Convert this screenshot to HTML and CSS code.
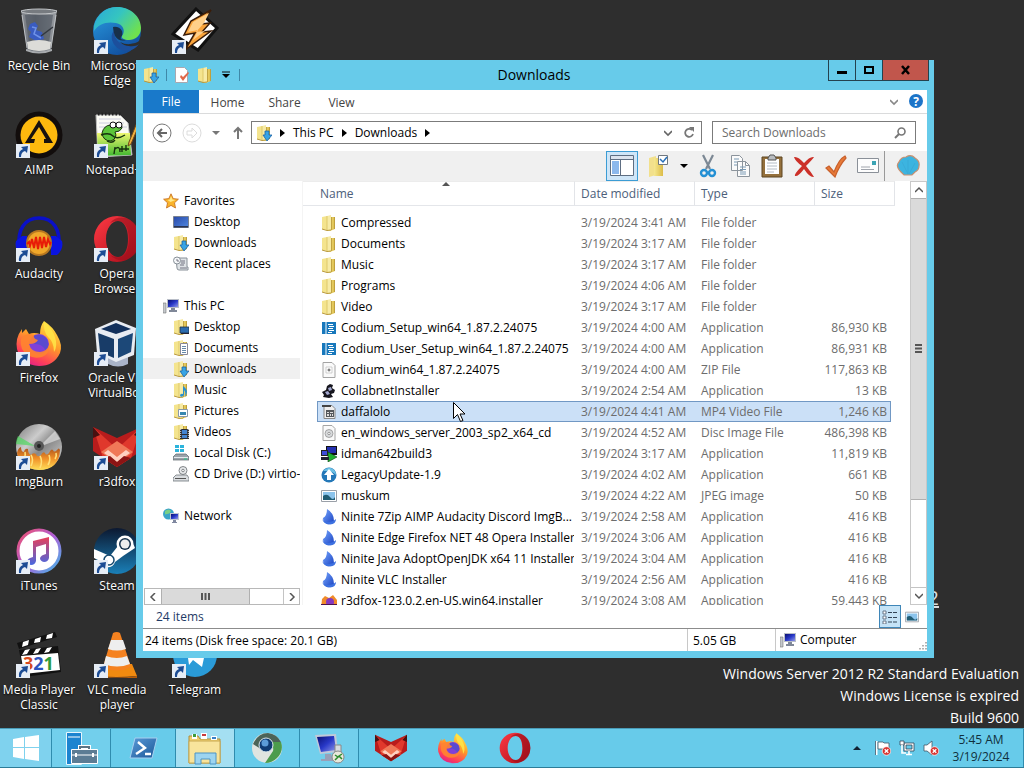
FILE: index.html
```html
<!DOCTYPE html>
<html lang="en">
<head>
  <meta charset="UTF-8">
  <meta name="viewport" content="width=device-width, initial-scale=1.0">
  <title>Downloads</title>
  <link rel="stylesheet" href="styles.css">
</head>
<body>
  <svg class="sprite" aria-hidden="true">
    <defs>
      <linearGradient id="g-folder" x1="0" x2="1"><stop offset="0" stop-color="#f6e890"/><stop offset="1" stop-color="#dcbc48"/></linearGradient>
      <linearGradient id="g-edge" x1="0" x2="1" y1="0" y2=".6"><stop offset="0" stop-color="#2aa8d8"/><stop offset=".5" stop-color="#35c5c0"/><stop offset="1" stop-color="#6fe04f"/></linearGradient>
      <linearGradient id="g-edge2" x1="0" x2=".6" y1="0" y2="1"><stop offset="0" stop-color="#2ba0e4"/><stop offset="1" stop-color="#1150a0"/></linearGradient>
      <linearGradient id="g-opera" x1="0" x2="1" y1="0" y2="1"><stop offset="0" stop-color="#ff3a44"/><stop offset="1" stop-color="#a80b18"/></linearGradient>
      <linearGradient id="g-fox" x1=".8" x2=".3" y1="0" y2="1"><stop offset="0" stop-color="#fff14a"/><stop offset=".45" stop-color="#ff9a2a"/><stop offset=".8" stop-color="#ff4058"/><stop offset="1" stop-color="#e0208a"/></linearGradient>
      <linearGradient id="g-disc" x1="0" x2="1" y1="0" y2="1"><stop offset="0" stop-color="#777"/><stop offset=".35" stop-color="#ccc"/><stop offset=".55" stop-color="#888"/><stop offset="1" stop-color="#ddd"/></linearGradient>
      <linearGradient id="g-flame" x1="0" x2="0" y1="0" y2="1"><stop offset="0" stop-color="#a8501a"/><stop offset=".5" stop-color="#f09028"/><stop offset="1" stop-color="#ffe05a"/></linearGradient>
      <linearGradient id="g-bin" x1="0" x2="1"><stop offset="0" stop-color="#8c9096"/><stop offset=".4" stop-color="#5c6169"/><stop offset="1" stop-color="#9da1a6"/></linearGradient>
      <linearGradient id="g-itunes" x1="0" x2="1" y1="0" y2="1"><stop offset="0" stop-color="#f0506a"/><stop offset=".5" stop-color="#b060d8"/><stop offset="1" stop-color="#40b8e8"/></linearGradient>
      <linearGradient id="g-note" x1="0" x2="0" y1="0" y2="1"><stop offset="0" stop-color="#e8405a"/><stop offset="1" stop-color="#4868e0"/></linearGradient>
      <linearGradient id="g-steam" x1="0" x2="0" y1="0" y2="1"><stop offset="0" stop-color="#0c1830"/><stop offset="1" stop-color="#1a80b8"/></linearGradient>
      <linearGradient id="g-screen" x1="0" x2="1" y1="0" y2="1"><stop offset="0" stop-color="#0a1070"/><stop offset=".5" stop-color="#2838c8"/><stop offset="1" stop-color="#9098e8"/></linearGradient>
      <linearGradient id="g-desk" x1="0" x2="1" y1="0" y2="1"><stop offset="0" stop-color="#2848a8"/><stop offset="1" stop-color="#5088e0"/></linearGradient>
      <linearGradient id="g-ninite" x1="0" x2="1" y1="0" y2="1"><stop offset="0" stop-color="#78a8ff"/><stop offset="1" stop-color="#1840c0"/></linearGradient>
      <linearGradient id="g-ps" x1="0" x2="1" y1="0" y2="1"><stop offset="0" stop-color="#5a9ad8"/><stop offset="1" stop-color="#1c5898"/></linearGradient>
      <linearGradient id="g-grass" x1="0" x2="0" y1="0" y2="1"><stop offset="0" stop-color="#f0f870"/><stop offset="1" stop-color="#40b830"/></linearGradient>
    </defs>

    <!-- desktop icons -->
    <symbol id="recycle" viewBox="0 0 48 48">
      <path d="M6 3h36l-6 40q-12 5-24 0z" fill="url(#g-bin)"/>
      <path d="M10 8h28l-4 28H14z" fill="#555c66" opacity=".7"/>
      <path d="M15 17l5-2 3 4-2 4 6 2 2 7-8 2-7-4 2-5-3-3z" fill="#3a5cc0"/>
      <path d="M17 20l4 1-2 6 7 4" stroke="#6f92e8" stroke-width="1.5" fill="none"/>
      <path d="M26 29l12-9" stroke="#33383f" stroke-width="1.5"/>
      <path d="M12 35q12-4 24 0l-1 7q-11 4-22 0z" fill="#dcdcd8"/>
      <path d="M11 42q13 5 26 0v2q-13 5-26 0z" fill="#a8abae"/>
      <ellipse cx="24" cy="4.500" rx="18" ry="2.500" fill="#777b80" stroke="#c3c6c9"/>
      <path d="M7 8l5 33M41 8l-5 33" stroke="#cfd2d5" stroke-width="1" opacity=".8"/>
    </symbol>
    <symbol id="edge" viewBox="0 0 48 48">
      <circle cx="24" cy="24" r="24" fill="url(#g-edge2)"/>
      <path d="M1 19C4 7 13 0 24 0c14 0 24 10 24 21 0 8-6 12-12 12-5 0-8-2-7-4 4-5 1-12-6-13C14 14 5 17 1 24z" fill="url(#g-edge)"/>
      <path d="M24 22q-7 3-5 11 3 10 14 11 8 0 13-7-4 3-10 2-10-1-14-9-1-5 2-8z" fill="#1c4f9c"/>
      <path d="M20 20q6-1 9 4 1 4-1 6-2 3 5 3-7 2-11-4-2-5-2-9z" fill="#18304a"/>
      <path d="M46 37q-4 3-10 2-5 0-9-4 9 5 20-1z" fill="#2e2e2e"/>
    </symbol>
    <symbol id="winamp" viewBox="0 0 48 48">
      <path d="M25 2l21 19-19 22L2 27z" fill="#fff" stroke="#111" stroke-width="3"/>
      <path d="M40 3L20 14l-7 14 11-2-10 17 26-19-9 1 8-9-9 1z" fill="#f9a33a" stroke="#3a1c08" stroke-width="1.500"/>
      <path d="M38 6L22 15l-5 10 10-2-5 10 12-9-9 1 8-9z" fill="#ffd08a"/>
    </symbol>
    <symbol id="aimp" viewBox="0 0 48 48">
      <circle cx="24" cy="24" r="23.500" fill="#120d0c"/>
      <circle cx="24" cy="24" r="18.500" fill="#fdb90e"/>
      <path d="M24 9l14 23h-9v-4h2l-7-12-8 12h4l-1 4H10z" fill="#17110f"/>
    </symbol>
    <symbol id="npp" viewBox="0 0 48 48">
      <path d="M3 4h24l8 8 4 32-34 2z" fill="#fbfbf5" stroke="#bbb"/>
      <path d="M4 22h33l1 22-33 1z" fill="url(#g-grass)"/>
      <path d="M6 8h22M6 12h25M6 16h28" stroke="#ccd" />
      <path d="M5 3h24" stroke="#222" stroke-width="3" stroke-dasharray="1.500 2"/>
      <path d="M9 22q2-8 9-8 3-4 6 0 5-2 5 3-2 4-7 4 3 6-4 9-8 0-9-8z" fill="#5cc43a" stroke="#18300c"/>
      <circle cx="20" cy="14" r="3" fill="#fff" stroke="#111"/><circle cx="26" cy="14" r="3" fill="#fff" stroke="#111"/>
      <path d="M8 24q8-3 12 1t12-1M14 30q5 3 8-1M22 36l-1 7M22 38q5-4 5 3M29 35v6M33 34v6M27 38h9" stroke="#16320e" stroke-width="1.400" fill="none"/>
      <path d="M45 9l-9 22-1 4 3-2 9-21z" fill="#f0b040" stroke="#704818"/>
    </symbol>
    <symbol id="audacity" viewBox="0 0 48 48">
      <path d="M4 34C2 14 10 3 24 3s22 11 20 31" fill="none" stroke="#0a10c8" stroke-width="3.500"/>
      <path d="M1 26q-2 8 5 14h6V21H7zM47 26q2 8-5 14h-6V21h5z" fill="#0a14e0"/>
      <circle cx="24" cy="28" r="13" fill="#b87820"/><circle cx="24" cy="28" r="11" fill="#f0a82a"/>
      <path d="M12 29l2-2 1 4 2-7 2 9 2-11 2 12 2-12 2 11 2-11 2 10 2-8 2 5 1-2" fill="none" stroke="#e81c08" stroke-width="2"/>
    </symbol>
    <symbol id="opera" viewBox="0 0 48 48">
      <path fill-rule="evenodd" d="M24 1a23 23 0 1 0 0 46 23 23 0 1 0 0-46zM25 6c6 0 10 7 10 18s-4 18-10 18-12-7-12-18S19 6 25 6z" fill="url(#g-opera)"/>
      <path d="M17 8q6-7 16-5 14 5 14 21T33 45q-9 2-16-5 12 6 17-4 4-11 0-23-5-11-17-5z" fill="#98101c" opacity=".55"/>
    </symbol>
    <symbol id="firefox" viewBox="0 0 48 48">
      <path d="M29 2q9 6 13 14 6 10 3 18-6 13-21 13Q6 46 2 30 0 19 7 10v4l4-4 3 5q5-2 11 0Q25 7 29 2z" fill="url(#g-fox)"/>
      <circle cx="24" cy="25" r="10" fill="#8040d8"/>
      <path d="M18 17q8-3 14 3 3 7-1 12-4-8-12-7 3-3-1-8z" fill="#5a4ad0"/>
      <path d="M6 20q5-7 13-4-1 4 4 5-2 4-9 4 2 8 11 8 7-1 9-7 1 9-7 12-14 3-20-8-2-5-1-10z" fill="#ff8430" opacity=".9"/>
      <path d="M29 3q8 6 11 15 3 9-1 15 0-10-6-15-5-6-4-15z" fill="#ffe648" opacity=".85"/>
    </symbol>
    <symbol id="vbox" viewBox="0 0 48 48">
      <path d="M14 38l9-2 12 2v7q-10 5-20 0z" fill="#aab4c8"/>
      <path d="M23 1l20 8-2 27-18 7L4 34 2 10z" fill="#e8ecf2"/>
      <path d="M23 4l15 6-15 5-15-5z" fill="#12305c"/>
      <path d="M5 14l16 6v19L7 33z" fill="#183c68"/><path d="M40 14l-15 6v19l13-6z" fill="#1c4878"/>
    </symbol>
    <symbol id="imgburn" viewBox="0 0 48 48">
      <circle cx="24" cy="24" r="23" fill="url(#g-disc)"/>
      <path d="M20 23L3 13q-2 4-2 8z" fill="#50d860" opacity=".7"/><path d="M24 24L40 8l5 8z" fill="#fff" opacity=".5"/>
      <path d="M2 30q1-5 4-6 0 5 3 5 1-4 4-3 0 5 3 6 2-3 5-1 1 4 5 1 2-4 4-2 1 3 4 0 2-5 4-3 1 3 4 0 2-3 3 0-1 20-21 20Q5 46 2 30z" fill="url(#g-flame)"/>
      <path d="M9 36q2-4 1-7M16 43q3-6 0-11M25 45q3-7 0-12M33 42q3-5 1-10M40 36q2-3 1-6" stroke="#ffe07a" stroke-width="1.600" fill="none"/>
      <circle cx="24" cy="23" r="5" fill="#555"/><circle cx="24" cy="23" r="2" fill="#222"/>
    </symbol>
    <symbol id="r3dfox" viewBox="0 0 48 48">
      <path d="M0 4l24 11L48 4v24L24 44 0 28z" fill="#b81c1c"/>
      <path d="M0 4l24 22L48 4 38 35 24 44 10 35z" fill="#e0382c"/>
      <path d="M0 4l7 8-7 3zM48 4l-7 8 7 3z" fill="#4a1010"/>
      <path d="M8 29l16-11 16 11-16 12z" fill="#f07858"/><path d="M15 27l9 7 9-7 4 3-13 9-13-9z" fill="#ffd0c0"/>
      <path d="M10 35l7-2 7 6 7-6 7 2-14 9z" fill="#8c1414"/>
    </symbol>
    <symbol id="itunes" viewBox="0 0 48 48">
      <circle cx="24" cy="24" r="21" fill="#fff" stroke="url(#g-itunes)" stroke-width="3"/>
      <path d="M18 14l16-4v21q-1 4-5 4-4-1-4-4 1-3 6-4V17l-10 3v14q-1 4-5 4-4-1-4-4 1-3 6-4z" fill="url(#g-note)"/>
    </symbol>
    <symbol id="steam" viewBox="0 0 48 48">
      <circle cx="24" cy="24" r="23" fill="url(#g-steam)"/>
      <path d="M1 22l16 7 8-10 5-9q10 4 12 11l-12 8-8 6q-2 6-8 5-5-1-7-6L1 31z" fill="#fff"/>
      <circle cx="32" cy="17" r="8.500" fill="#fff"/><circle cx="32" cy="17" r="6" fill="#16324c"/><circle cx="32" cy="17" r="4.500" fill="#eee"/>
      <circle cx="16" cy="33" r="5" fill="none" stroke="#164a70" stroke-width="1.500"/>
    </symbol>
    <symbol id="mpc" viewBox="0 0 48 48">
      <path d="M2 12L40 1l2 5L4 18z" fill="#111"/><path d="M8 11l6-2-1 5-6 2zM20 8l6-2-1 5-6 1zM32 4l6-2-1 5-6 1z" fill="#fff"/>
      <path d="M4 19l39-4 3 26-37 5z" fill="#111"/>
      <path d="M10 19l5-1-3 5-5 1zM21 18l5-1-3 5-5 1zM32 17l5-1-3 5-5 1z" fill="#fff"/>
      <path d="M6 25l37-3 2 17-36 4z" fill="#fff"/>
    </symbol>
    <symbol id="vlc" viewBox="0 0 48 48">
      <path d="M8 33h31l5 12q-20 2-41 0z" fill="#f08a10"/><path d="M3 45q20 3 41 0v2H3z" fill="#b85c08"/>
      <path d="M20 2q4-2 7 0l11 34q-14 7-28 0z" fill="#f58220"/>
      <path d="M18 9h12l3 9q-9 3-18 0zM13 25q11 4 21 0l3 8q-13 5-26 0z" fill="#eee"/>
    </symbol>
    <symbol id="telegram" viewBox="0 0 48 48">
      <circle cx="24" cy="24" r="22" fill="#2a9bd8"/>
      <path d="M8 24l28-11-5 23-9-7-4 5-1-7z" fill="#fff"/>
    </symbol>
    <symbol id="shortcut" viewBox="0 0 14 14">
      <rect width="14" height="14" fill="#e6edf6"/>
      <path d="M3 13q-1-6 4-8L5 3l7-1-1 7-2-2q-4 1-4 6z" fill="#1c4c94"/>
    </symbol>

    <!-- 16px icons -->
    <symbol id="folder" viewBox="0 0 16 16">
      <path d="M1 2l5-1v14l-5-1z" fill="#f4e48e"/><path d="M6 2h8v12l-5 2-3-1z" fill="url(#g-folder)"/>
      <path d="M6 1l4-1v15l-4 1z" fill="#f7eba6"/><path d="M6 1v14" stroke="#d8c060" stroke-width=".8"/><path d="M10.500 2v13M13.500 2v12" stroke="#b8983a" stroke-width=".8"/><path d="M1 14l5 1.500 4-.5" stroke="#b8983a" fill="none"/>
    </symbol>
    <symbol id="folder-down" viewBox="0 0 16 16"><use href="#folder"/><path d="M9 6h4v4h3l-5 6-4-6h2z" fill="#38a4e4" stroke="#1a62a4" stroke-width=".8"/></symbol>
    <symbol id="folder-desk" viewBox="0 0 16 16"><use href="#folder"/><path d="M7 8h9v6H7z" fill="#2c6cb0" stroke="#234" stroke-width=".8"/><path d="M8 14h8v1H8z" fill="#223"/></symbol>
    <symbol id="folder-doc" viewBox="0 0 16 16"><use href="#folder"/><path d="M7.500 3.500h7v11h-7z" fill="#fff" stroke="#889"/><path d="M9 6.500h4M9 8.500h4M9 10.500h4M9 12.500h4" stroke="#68a"/></symbol>
    <symbol id="folder-music" viewBox="0 0 16 16"><use href="#folder"/><path d="M10 4q4 3 4 6-1 4-2 5 1-5-1-7v5q-2 3-4 1 0-3 3-2z" fill="#2890d0"/></symbol>
    <symbol id="folder-pic" viewBox="0 0 16 16"><use href="#folder"/><path d="M5.500 6.500h9v7h-9z" fill="#fff" stroke="#89a"/><path d="M7 9h6v3H7z" fill="#3888b0"/></symbol>
    <symbol id="folder-vid" viewBox="0 0 16 16"><use href="#folder"/><path d="M7 5h9v10H7z" fill="#2a2c34"/><path d="M9 6h5v4H9zM9 11h5v3H9z" fill="#4484d0"/><path d="M7.700 5v10M15.300 5v10" stroke="#ddd" stroke-dasharray="1 1"/></symbol>
    <symbol id="star" viewBox="0 0 16 16"><path d="M8 .8l2.200 4.800 5.200.6-3.900 3.600 1 5.200L8 12.400 3.500 15l1-5.200L.6 6.200l5.200-.6z" fill="#f9b42c" stroke="#c46a1c" stroke-width=".8"/><path d="M8 3l1.500 3.500 3 .5-5 2-3-2 2.300-.5z" fill="#ffe88a"/></symbol>
    <symbol id="desk" viewBox="0 0 16 16"><path d="M.5 2.500h15v11H.5z" fill="url(#g-desk)" stroke="#7a8290"/><path d="M1 12h14v1.500H1z" fill="#2a3450"/></symbol>
    <symbol id="recent" viewBox="0 0 16 16"><path d="M3 2h11v9h1v3H6q-2 0-2-2z" fill="#dfe3e6" stroke="#889098"/><circle cx="4" cy="4.500" r="3.500" fill="#f4f6f8" stroke="#889098"/><path d="M4 3v2h2M8 5h4M8 7h4M7 9h4M7 12h7" stroke="#667" stroke-width=".9" fill="none"/></symbol>
    <symbol id="pc" viewBox="0 0 16 16"><path d="M0 5h3v10H0z" fill="#c4c8cc" stroke="#777" stroke-width=".6"/><path d="M4 1h12v9H4z" fill="#b9bec8"/><path d="M5 2h10v7H5z" fill="url(#g-screen)"/><path d="M8 10h4v2h2v2H6v-2h2z" fill="#808898"/></symbol>
    <symbol id="disk" viewBox="0 0 16 16"><path d="M2 0h4v3H2zM7 0h4v3H7zM2 4h4v3H2zM7 4h4v3H7z" fill="#2cb4dc"/><path d="M3 9h10l3 3v3H0v-3z" fill="#9aa2aa" stroke="#5c646c" stroke-width=".7"/><path d="M1 12.500h14" stroke="#e4e8ec"/><path d="M11 14h3" stroke="#2c8"/></symbol>
    <symbol id="cd" viewBox="0 0 16 16"><circle cx="10" cy="4.500" r="4" fill="#e8eaec" stroke="#808488"/><circle cx="10" cy="4.500" r="1.300" fill="#fff" stroke="#808488"/><path d="M3 9h11l2 3v3H0v-3z" fill="#dadde0" stroke="#70767c" stroke-width=".8"/><path d="M2 12.500h11" stroke="#555"/></symbol>
    <symbol id="network" viewBox="0 0 16 16"><circle cx="5.500" cy="6" r="5.500" fill="#3aa4c8"/><path d="M2 3q4-3 6 0-1 3-4 3T2 8z" fill="#7ad084"/><path d="M7 5h9v7H7z" fill="#c0c6d0"/><path d="M8 6h7v5H8z" fill="url(#g-screen)"/><path d="M10 12h3v2h1v1H9v-1h1z" fill="#8088a0"/></symbol>
    <symbol id="codium" viewBox="0 0 16 16"><path d="M1 2h14v12H1z" fill="#1878bc"/><path d="M5 2v12" stroke="#fff"/><path d="M7 4.500h5M8 6.500h5M7 8.500h5M8 10.500h5M7 12.500h4" stroke="#fff"/></symbol>
    <symbol id="zip" viewBox="0 0 16 16"><path d="M2 .5h9l3 3v12H2z" fill="#fafafa" stroke="#a4a4a4"/><path d="M5 5h6v6H5z" fill="#fff" stroke="#bbb" stroke-width=".7"/><path d="M8 6.500v3M6.500 8h3" stroke="#555"/></symbol>
    <symbol id="collab" viewBox="0 0 16 16"><path d="M9 1l3 1-1 3 3 2-1 3-3 1 2 3-4 1-6-1 1-2-2-3 4-2 1-4z" fill="#16161e"/><path d="M7 5l3-1 1 3-3 1zM4 9l3-1 2 3-3 1z" fill="#a4a8d0"/></symbol>
    <symbol id="mp4" viewBox="0 0 16 16"><path d="M3 1.500h8l3 3v10H3z" fill="#eee" stroke="#888"/><path d="M1 1h9v2H1z" fill="#444"/><path d="M5 6h8v7H5z" fill="#54585c"/><path d="M6 8h2v1H6zM6 10h2v2H6zM9 8h3v1H9zM9 10h1v2H9zM11 10h1v2h-1z" fill="#ddd"/></symbol>
    <symbol id="iso" viewBox="0 0 16 16"><path d="M2 .5h9l3 3v12H2z" fill="#fafafa" stroke="#a4a4a4"/><circle cx="8" cy="8.500" r="4" fill="#d8dadc" stroke="#888" stroke-width=".7"/><circle cx="8" cy="8.500" r="1.200" fill="#fff" stroke="#666" stroke-width=".6"/></symbol>
    <symbol id="idman" viewBox="0 0 16 16"><path d="M5 0h11v9H5z" fill="#111"/><path d="M6 1h9v6H6z" fill="#2430b0"/><path d="M0 4h7v6H0z" fill="#222"/><path d="M1 5h5v4H1z" fill="#3c4cd8"/><path d="M7 6l9 5-9 5z" fill="#20b030" stroke="#0a4010" stroke-width=".6"/><path d="M0 11h8v3H0z" fill="#223"/></symbol>
    <symbol id="legacy" viewBox="0 0 16 16"><circle cx="8" cy="8" r="7.500" fill="#2478b8"/><path d="M2 4q4-4 8-3 5 2 5 7-4-4-8-4z" fill="#6cc0e4"/><path d="M8 2l5 6h-3v5H6V8H3z" fill="#fff"/></symbol>
    <symbol id="jpeg" viewBox="0 0 16 16"><path d="M.5 2.500h15v11H.5z" fill="#fff" stroke="#9aa0a8"/><path d="M2 4h12v8H2z" fill="#8cc4ec"/><path d="M2 8q4-3 7 1t5 0v3H2z" fill="#205c74"/></symbol>
    <symbol id="ninite" viewBox="0 0 16 16"><path d="M6 0q7 4 7 12-3 4-7 3-4-2-4-6 4-2 4-9z" fill="url(#g-ninite)"/><path d="M1 9q1 4 6 4t8-3q0 5-6 5.500Q2 15 1 9z" fill="#3c70e0"/></symbol>
    <symbol id="r3d16" viewBox="0 0 16 16"><path d="M1 6l3-3 4 2 4-3 4 5v9H0z" fill="#f08a28"/><circle cx="9" cy="9" r="4" fill="#8438c0"/><path d="M0 11h16v5H0z" fill="#4a1450"/></symbol>
    <symbol id="props" viewBox="0 0 16 16"><path d="M1.500 .5h9l3 3v12h-12z" fill="#fff" stroke="#a8a8b0"/><path d="M6 10l3 4 6-8-1-1-5 5-2-2z" fill="#e06848"/></symbol>
    <symbol id="scissors" viewBox="0 0 24 24"><path d="M7 1l7 14M17 1l-7 14" stroke="#7c8894" stroke-width="2.200" fill="none"/><circle cx="8" cy="19" r="3" fill="none" stroke="#2490d4" stroke-width="2.400"/><circle cx="16" cy="19" r="3" fill="none" stroke="#2490d4" stroke-width="2.400"/></symbol>
    <symbol id="copy" viewBox="0 0 24 24"><path d="M3.500 1.500h8l3 3v12h-11zM9.500 7.500h8l4 4v11h-12z" fill="#fbfbfb" stroke="#8c949c"/><path d="M17.500 7.500v4h4" fill="none" stroke="#8c949c"/><path d="M6 5h5M6 8h3M6 11h3M12 13h6M12 15.500h6M12 18h6M12 20h6" stroke="#7a9ab4"/></symbol>
    <symbol id="paste" viewBox="0 0 24 24"><path d="M2 3h20v20H2z" fill="#94703c" stroke="#5c4420"/><path d="M5 5h14v15H5z" fill="#fff"/><path d="M8 4l2-3h4l2 3v2H8z" fill="#b8bcc0" stroke="#555"/><path d="M7 9h10M7 12h10M7 15h10M7 18h7" stroke="#b4bcc4"/></symbol>
    <symbol id="delete" viewBox="0 0 24 24"><path d="M2 3q4-1 10 6 6-7 10-6-2 3-8 9 5 6 8 11-4 1-10-8-6 8-9 7-1-2 7-10Q3 7 2 3z" fill="#cc3028"/></symbol>
    <symbol id="tick" viewBox="0 0 24 24"><path d="M2 14l3-2 5 6Q15 5 21 2l1 2q-7 8-11 19z" fill="#e87a38" stroke="#c8602c" stroke-width="1.200"/></symbol>
    <symbol id="mail" viewBox="0 0 24 24"><path d="M1.500 4.500h21v14h-21z" fill="#fdfdfd" stroke="#8a9098"/><path d="M16 7h4v4h-4z" fill="#3ca4b4"/><path d="M5 13h9M5 15.500h13" stroke="#a0a4ac"/></symbol>
    <symbol id="shell" viewBox="0 0 24 24"><path d="M5 18Q-1 12 3 8q2-5 7-5 5-3 9 1 5 3 4 8 0 4-4 6l-3 3H8z" fill="#3cb4e0" stroke="#c89070" stroke-width="1.200"/><path d="M12 20L6 8M12 20V6M13 20l6-11" stroke="#38a8d4" stroke-width=".8"/></symbol>
    <symbol id="panes" viewBox="0 0 24 24"><path d="M.5 1.500h23v20H.5z" fill="#fff" stroke="#5e6e82"/><path d="M1 2h22v3H1z" fill="#dce4ee"/><path d="M2 7h7v13H2z" fill="#8cb8ec"/><path d="M.5 5.500h23M10.500 6v15" stroke="#5e6e82"/></symbol>
    <symbol id="organize" viewBox="0 0 24 24"><path d="M3 4l7-2v19l-7 2z" fill="#f2e08c"/><path d="M8 4h9v18H8z" fill="url(#g-folder)"/><path d="M12.500 1.500h9v9h-9z" fill="#fff" stroke="#707880"/><path d="M14 5l3 3 4-5" fill="none" stroke="#2870b8" stroke-width="1.500"/></symbol>

    <!-- taskbar icons -->
    <symbol id="start" viewBox="0 0 32 32"><path d="M3 7l11-2v10H3zM15 5l14-2v12H15zM3 16h11v11L3 25zM15 16h14v13l-14-2z" fill="#fff"/></symbol>
    <symbol id="server" viewBox="0 0 36 36"><path d="M3.500 2.500h15v32h-15z" fill="#1c84d0" stroke="#e8f6fc"/><path d="M5 7h12" stroke="#fff"/><path d="M17 20v-3h9v3" fill="none" stroke="#fff" stroke-width="4"/><path d="M17 20v-3h9v3" fill="none" stroke="#5c7484" stroke-width="2"/><path d="M8.500 19.500h26v14h-26z" fill="#5c7c94" stroke="#fff"/><path d="M9 25h25" stroke="#fff"/><path d="M13 23v4M30 23v4" stroke="#fff" stroke-width="2"/></symbol>
    <symbol id="powershell" viewBox="0 0 32 32"><path d="M8 6h22l-5 20H3z" fill="url(#g-ps)" stroke="#a8d0f0"/><path d="M11 10l7 6-9 6M18 22h6" stroke="#fff" stroke-width="2.400" fill="none"/></symbol>
    <symbol id="explorer" viewBox="0 0 36 36"><path d="M2 6h9l2 3h20v24H2z" fill="#f0cf70" stroke="#b08c38"/><path d="M5 4h5v5H5zM14 3h6v6h-6zM24 6h6v4h-6z" fill="#fff"/><path d="M6 4h3v3H6z" fill="#3c9c3c"/><path d="M15 4h4v2h-4z" fill="#c83c3c"/><path d="M25 7h4v2h-4z" fill="#3880c8"/><path d="M2 11h31v22H2z" fill="#f8e49c" stroke="#c8a850"/><path d="M8 34V23h21v11h-6v-5h-9v5z" fill="#9cd4f0" stroke="#4c94c4"/></symbol>
    <symbol id="chrome" viewBox="0 0 32 32"><circle cx="16" cy="16" r="15" fill="#e0e4e0"/><path d="M2 12Q7 1 17 1q9 1 13 9H17q-6 0-7 7z" fill="#4c6458"/><path d="M30 10q3 9-4 16-5 5-12 5l8-12q1-4-2-9z" fill="#4c9c4c"/><circle cx="15" cy="13" r="7" fill="#103c74" stroke="#dce8ec"/><circle cx="14" cy="11" r="3.500" fill="#5c9cd8"/></symbol>
    <symbol id="rdp" viewBox="0 0 32 32"><path d="M2 3l21-1 2 18-18 2z" fill="#c0c8d8"/><path d="M4 5l17-1 2 14-15 2z" fill="url(#g-screen)"/><path d="M12 22h6l1 4h5v3H8v-2h4z" fill="#98a0b8"/><path d="M22 13h6v12h-6z" fill="#d8dce0" stroke="#888"/><circle cx="25" cy="25" r="6" fill="#e8e8dc" stroke="#888"/><path d="M22 23l3 2-3 3M29 22l-3 2 3 3" fill="none" stroke="#2c8c2c" stroke-width="1.500"/></symbol>
    <symbol id="err" viewBox="0 0 16 16"><circle cx="11.500" cy="11" r="4.300" fill="#d83430" stroke="#fff" stroke-width=".7"/><path d="M9.700 9.200l3.600 3.600M13.300 9.200l-3.600 3.600" stroke="#fff" stroke-width="1.300"/></symbol>
    <symbol id="flag" viewBox="0 0 16 16"><path d="M1.500 1v14" stroke="#fff" stroke-width="2"/><path d="M.5 1v14" stroke="#345" stroke-width=".7"/><path d="M3 2h5l1 1h5v7H9L8 9H3z" fill="#fff" stroke="#456" stroke-width=".8"/><use href="#err"/></symbol>
    <symbol id="net" viewBox="0 0 16 16"><path d="M5 3h10v8H5z" fill="#fff" stroke="#345" stroke-width=".8"/><path d="M7 5h6v4H7z" fill="#67cbea" stroke="#345" stroke-width=".8"/><path d="M1 1h4v4H1z" fill="#fff" stroke="#345" stroke-width=".8"/><path d="M3 5v8h4M10 11v3M7 14.500h6" stroke="#fff" stroke-width="1.600" fill="none"/></symbol>
    <symbol id="vol" viewBox="0 0 16 16"><path d="M1 5h3l5-4v14l-5-4H1z" fill="#fff" stroke="#456" stroke-width=".8"/><use href="#err"/></symbol>
  </svg>

  <main class="desktop">
    <div class="watermark-hero">2</div>
    <div class="desktop-icons" id="desktop-icons"></div>

    <div class="watermark">
      <p>Windows Server 2012 R2 Standard Evaluation</p>
      <p>Windows License is expired</p>
      <p>Build 9600</p>
    </div>

    <section class="window">
      <header class="titlebar">
        <div class="quick-access">
          <svg class="icon"><use href="#folder-down"/></svg>
          <span class="sep"></span>
          <button class="plain" aria-label="Properties"><svg class="icon"><use href="#props"/></svg></button>
          <button class="plain" aria-label="New folder"><svg class="icon"><use href="#folder"/></svg></button>
          <button class="plain" aria-label="Customize"><svg class="icon-s" viewBox="0 0 8 8"><path d="M0 1h8" stroke="#111"/><path d="M0 3h8L4 7z"/></svg></button>
          <span class="sep"></span>
        </div>
        <h1>Downloads</h1>
        <div class="caption-buttons">
          <button aria-label="Minimize"><svg width="12" height="10"><path d="M1 6h10v3H1z"/></svg></button>
          <button aria-label="Maximize"><svg width="12" height="10"><path d="M2 2h8v6H2z" fill="none" stroke="#000" stroke-width="2"/></svg></button>
          <button class="close" aria-label="Close"><svg width="12" height="10"><path d="M2 1l7 8M9 1L2 9" stroke="#000" stroke-width="2.500"/></svg></button>
        </div>
      </header>

      <nav class="ribbon">
        <button class="file-tab">File</button>
        <button>Home</button>
        <button>Share</button>
        <button>View</button>
        <span class="spacer"></span>
        <button class="plain" aria-label="Expand ribbon"><svg class="icon-s" viewBox="0 0 8 8"><path d="M0 2l4 4 4-4" fill="none" stroke="#888" stroke-width="1.600"/></svg></button>
        <button class="plain help" aria-label="Help">?</button>
      </nav>

      <div class="address-row">
        <button class="plain" aria-label="Back"><svg width="20" height="20"><circle cx="10" cy="10" r="9" fill="#fff" stroke="#777"/><path d="M15 10H6M10 6l-4 4 4 4" fill="none" stroke="#666" stroke-width="2"/></svg></button>
        <button class="plain" aria-label="Forward"><svg width="20" height="20"><circle cx="10" cy="10" r="9" fill="#fff" stroke="#dcdcdc"/><path d="M5 8h5V5l5 5-5 5v-3H5z" fill="none" stroke="#dcdcdc"/></svg></button>
        <button class="plain" aria-label="Recent locations"><svg class="icon-s" viewBox="0 0 8 8"><path d="M0 2h8L4 6z" fill="#777"/></svg></button>
        <button class="plain up" aria-label="Up"><svg width="12" height="14"><path d="M6 13V2M2 6l4-4 4 4" fill="none" stroke="#777" stroke-width="2"/></svg></button>
        <div class="address">
          <svg class="icon"><use href="#folder-down"/></svg>
          <svg class="crumb-arrow" viewBox="0 0 5 8"><path d="M0 0l5 4-5 4z"/></svg>
          <a href="#">This PC</a>
          <svg class="crumb-arrow" viewBox="0 0 5 8"><path d="M0 0l5 4-5 4z"/></svg>
          <a href="#">Downloads</a>
          <svg class="crumb-arrow" viewBox="0 0 5 8"><path d="M0 0l5 4-5 4z"/></svg>
          <span class="spacer"></span>
          <button class="plain" aria-label="Previous locations"><svg class="icon-s" viewBox="0 0 8 8"><path d="M0 2l4 4 4-4" fill="none" stroke="#666" stroke-width="1.600"/></svg></button>
          <button class="plain refresh" aria-label="Refresh"><svg width="12" height="12"><path d="M9 3a4 4 0 1 0 1 4" fill="none" stroke="#777" stroke-width="1.800"/><path d="M6 0h5v5z" fill="#777"/></svg></button>
        </div>
        <label class="search">
          <input type="text" placeholder="Search Downloads" aria-label="Search Downloads">
          <svg width="12" height="12"><circle cx="7.500" cy="4.500" r="3.500" fill="none" stroke="#777" stroke-width="1.600"/><path d="M5 7l-4 4" stroke="#777" stroke-width="2"/></svg>
        </label>
      </div>

      <div class="toolbar">
        <button class="on" aria-label="Navigation pane"><svg class="icon-l"><use href="#panes"/></svg></button>
        <button class="drop" aria-label="Organize"><svg class="icon-l"><use href="#organize"/></svg><svg class="icon-s" viewBox="0 0 8 8"><path d="M0 2h8L4 6z"/></svg></button>
        <button aria-label="Cut"><svg class="icon-l"><use href="#scissors"/></svg></button>
        <button aria-label="Copy"><svg class="icon-l"><use href="#copy"/></svg></button>
        <button aria-label="Paste"><svg class="icon-l"><use href="#paste"/></svg></button>
        <button aria-label="Delete"><svg class="icon-l"><use href="#delete"/></svg></button>
        <button aria-label="Rename"><svg class="icon-l"><use href="#tick"/></svg></button>
        <button aria-label="Mail"><svg class="icon-l"><use href="#mail"/></svg></button>
        <button class="shell" aria-label="Classic Shell"><svg class="icon-l"><use href="#shell"/></svg></button>
      </div>

      <div class="content">
        <aside class="nav-pane">
          <div class="tree" id="tree"></div>
          <div class="hscroll">
            <button aria-label="Scroll left"><svg class="icon-s" viewBox="0 0 8 8"><path d="M6 0L2 4l4 4" fill="none" stroke="#555" stroke-width="1.500"/></svg></button>
            <div class="thumb"><svg width="9" height="7"><path d="M1 0v7M4.500 0v7M8 0v7" stroke="#555" stroke-width="2"/></svg></div>
            <button aria-label="Scroll right"><svg class="icon-s" viewBox="0 0 8 8"><path d="M2 0l4 4-4 4" fill="none" stroke="#555" stroke-width="1.500"/></svg></button>
          </div>
        </aside>
        <div class="file-pane">
          <table>
            <colgroup><col class="c-edge"><col><col class="c-date"><col class="c-date"><col class="c-size"><col class="c-end"></colgroup>
            <thead>
              <tr><th></th><th class="sorted">Name<svg class="sort" viewBox="0 0 8 4"><path d="M0 4l4-4 4 4z" fill="#555"/></svg></th><th>Date modified</th><th>Type</th><th>Size</th><th></th></tr>
            </thead>
            <tbody id="files"></tbody>
          </table>
        </div>
        <div class="vscroll">
          <button aria-label="Scroll up"><svg class="icon-s" viewBox="0 0 8 8"><path d="M0 6l4-4 4 4" fill="none" stroke="#555" stroke-width="1.500"/></svg></button>
          <div class="thumb"><svg width="7" height="9"><path d="M0 1h7M0 4.500h7M0 8h7" stroke="#555" stroke-width="2"/></svg></div>
          <div class="track"></div>
          <button aria-label="Scroll down"><svg class="icon-s" viewBox="0 0 8 8"><path d="M0 2l4 4 4-4" fill="none" stroke="#555" stroke-width="1.500"/></svg></button>
        </div>
      </div>

      <div class="details">
        <span>24 items</span>
        <span class="spacer"></span>
        <button class="view on" aria-label="Details view"><svg width="16" height="14"><path d="M1 1h3v3H1zM1 6h3v3H1zM1 11h3v3H1z" fill="#fff" stroke="#678"/><path d="M6 2.500h10M6 7.500h10M6 12h10" stroke="#345" stroke-dasharray="4 1"/></svg></button>
        <button class="view" aria-label="Thumbnail view"><svg class="icon-t" viewBox="0 0 16 16"><use href="#jpeg"/></svg></button>
      </div>

      <footer class="statusbar">
        <span class="s-main">24 items (Disk free space: 20.1 GB)</span>
        <span class="s-size">5.05 GB</span>
        <span class="s-zone"><svg class="icon"><use href="#pc"/></svg>Computer</span>
        <svg class="grip" viewBox="0 0 9 9"><path d="M8 0v9M5 3v6M2 6v3" stroke="#999" stroke-width="1.500" stroke-dasharray="1.500 1.500"/></svg>
      </footer>
    </section>

    <svg class="cursor" viewBox="0 0 12 20"><path d="M.5 .5v16l4-4 3 7 2.500-1-3-6.500h5z" fill="#fff" stroke="#000"/></svg>
  </main>

  <footer class="taskbar">
    <button class="start" aria-label="Start"><svg class="icon-task"><use href="#start"/></svg></button>
    <div class="tasks">
      <button class="running" aria-label="Server Manager"><svg class="icon-task big"><use href="#server"/></svg></button>
      <button aria-label="PowerShell"><svg class="icon-task"><use href="#powershell"/></svg></button>
      <button class="running active" aria-label="File Explorer"><svg class="icon-task big"><use href="#explorer"/></svg></button>
      <button aria-label="Chromium"><svg class="icon-task"><use href="#chrome"/></svg></button>
      <button class="running" aria-label="Remote Desktop"><svg class="icon-task"><use href="#rdp"/></svg></button>
      <button aria-label="r3dfox"><svg class="icon-task"><use href="#r3dfox"/></svg></button>
      <button aria-label="Firefox"><svg class="icon-task"><use href="#firefox"/></svg></button>
      <button aria-label="Opera"><svg class="icon-task"><use href="#opera"/></svg></button>
    </div>
    <div class="tray">
      <button class="plain" aria-label="Show hidden icons"><svg class="icon-s" viewBox="0 0 8 8"><path d="M0 6l4-4 4 4z" fill="#123"/></svg></button>
      <svg class="icon"><use href="#flag"/></svg>
      <svg class="icon"><use href="#net"/></svg>
      <svg class="icon"><use href="#vol"/></svg>
      <div class="clock"><span>5:45 AM</span><span>3/19/2024</span></div>
    </div>
  </footer>

  <script>
    // [icon, label, extra class, markup drawn over the icon]
    const shortcuts = [
      ['recycle', 'Recycle Bin', 'no-arrow'], ['aimp', 'AIMP'], ['audacity', 'Audacity'], ['firefox', 'Firefox'],
      ['imgburn', 'ImgBurn'], ['itunes', 'iTunes'],
      ['mpc', 'Media Player Classic', '', '<span class="countdown"><b class="n3">3</b><b class="n2">2</b><b class="n1">1</b></span>'],
      ['edge', 'Microsoft Edge'], ['npp', 'Notepad++'], ['opera', 'Opera Browser'], ['vbox', 'Oracle VM VirtualBox'],
      ['r3dfox', 'r3dfox'], ['steam', 'Steam'], ['vlc', 'VLC media player'],
      ['winamp', 'Winamp'], ['telegram', 'Telegram', 'last-row']
    ];

    // [icon, label, level, extra class]
    const tree = [
      ['star', 'Favorites', 0], ['desk', 'Desktop', 1], ['folder-down', 'Downloads', 1], ['recent', 'Recent places', 1],
      ['pc', 'This PC', 0], ['folder-desk', 'Desktop', 1], ['folder-doc', 'Documents', 1], ['folder-down', 'Downloads', 1, 'current'],
      ['folder-music', 'Music', 1], ['folder-pic', 'Pictures', 1], ['folder-vid', 'Videos', 1],
      ['disk', 'Local Disk (C:)', 1], ['cd', 'CD Drive (D:) virtio-win', 1],
      ['network', 'Network', 0]
    ];

    const files = [
      ['folder', 'Compressed', '3:41', 'File folder', ''],
      ['folder', 'Documents', '3:17', 'File folder', ''],
      ['folder', 'Music', '3:17', 'File folder', ''],
      ['folder', 'Programs', '4:06', 'File folder', ''],
      ['folder', 'Video', '3:17', 'File folder', ''],
      ['codium', 'Codium_Setup_win64_1.87.2.24075', '4:00', 'Application', '86,930 KB'],
      ['codium', 'Codium_User_Setup_win64_1.87.2.24075', '4:00', 'Application', '86,931 KB'],
      ['zip', 'Codium_win64_1.87.2.24075', '4:00', 'ZIP File', '117,863 KB'],
      ['collab', 'CollabnetInstaller', '2:54', 'Application', '13 KB'],
      ['mp4', 'daffalolo', '4:41', 'MP4 Video File', '1,246 KB', 'selected'],
      ['iso', 'en_windows_server_2003_sp2_x64_cd', '4:52', 'Disc Image File', '486,398 KB'],
      ['idman', 'idman642build3', '3:17', 'Application', '11,819 KB'],
      ['legacy', 'LegacyUpdate-1.9', '4:02', 'Application', '661 KB'],
      ['jpeg', 'muskum', '4:22', 'JPEG image', '50 KB'],
      ['ninite', 'Ninite 7Zip AIMP Audacity Discord ImgB...', '2:58', 'Application', '416 KB'],
      ['ninite', 'Ninite Edge Firefox NET 48 Opera Installer', '3:06', 'Application', '416 KB'],
      ['ninite', 'Ninite Java AdoptOpenJDK x64 11 Installer', '3:04', 'Application', '416 KB'],
      ['ninite', 'Ninite VLC Installer', '2:56', 'Application', '416 KB'],
      ['r3d16', 'r3dfox-123.0.2.en-US.win64.installer', '3:08', 'Application', '59,443 KB']
    ];

    document.getElementById('desktop-icons').innerHTML = shortcuts.map(([icon, label, cls, over]) => `
      <a href="#" class="shortcut ${cls || ''}">
        <span class="shortcut-icon"><svg><use href="#${icon}"/></svg>${over || ''}<svg class="arrow"><use href="#shortcut"/></svg></span>
        <span class="shortcut-label">${label}</span>
      </a>`).join('');

    document.getElementById('tree').innerHTML = tree.map(([icon, label, level, cls]) => `
      <a href="#" class="node level-${level} ${cls || ''}"><svg class="icon"><use href="#${icon}"/></svg><span>${label}</span></a>`).join('');

    document.getElementById('files').innerHTML = files.map(([icon, name, time, type, size, cls]) => `
      <tr class="${cls || ''}"><td></td><td class="name"><svg class="icon"><use href="#${icon}"/></svg><span>${name}</span></td><td>3/19/2024 ${time} AM</td><td>${type}</td><td class="size">${size}</td><td></td></tr>`).join('');
  </script>
</body>
</html>
```
FILE: styles.css
```css
/* Reset and base styling */
* { box-sizing: border-box; margin: 0; padding: 0; }
body {
  font-family: 'Open Sans', 'Noto Sans', sans-serif;
  font-size: 12px;
  height: 100vh;
  display: flex;
  flex-direction: column;
  overflow: hidden;
  background: #2e2e2e;
  color: #000;
}
button {
  font: inherit;
  color: inherit;
  background: none;
  border: none;
  display: flex;
  align-items: center;
  justify-content: center;
}
a { color: inherit; text-decoration: none; }
svg { display: block; flex: none; }
.sprite { position: absolute; width: 0; height: 0; }
.icon { width: 16px; height: 16px; }
.icon-s { width: 8px; height: 8px; }
.icon-l { width: 24px; height: 24px; }
.icon-t { width: 14px; height: 14px; }
.spacer { flex: 1; }

/* Desktop */
.desktop {
  position: relative;
  flex: 1;
  min-height: 0;
}
.desktop-icons {
  display: grid;
  grid-template-rows: repeat(7, 104px);
  grid-auto-columns: 78px;
  grid-auto-flow: column;
}
.shortcut {
  display: flex;
  flex-direction: column;
  align-items: center;
  gap: 3px;
  padding-top: 7px;
  color: #fff;
}
.shortcut.last-row { grid-row: 7; }
.shortcut-icon { position: relative; width: 48px; height: 48px; }
.shortcut-icon svg { width: 48px; height: 48px; }
.shortcut-icon .arrow {
  position: absolute;
  left: 1px;
  bottom: 1px;
  width: 14px;
  height: 14px;
}
.no-arrow .arrow { display: none; }
.countdown {
  position: absolute;
  left: 8px;
  top: 22px;
  font-size: 18px;
  line-height: 20px;
}
.n3 { color: #d84a1c; }
.n2 { color: #2c54c0; }
.n1 { color: #2c9a3c; }
.shortcut-label {
  width: 74px;
  text-align: center;
  line-height: 15px;
  text-shadow: 0 1px 2px #000;
}
.watermark {
  position: absolute;
  right: 5px;
  bottom: -1px;
  color: #fff;
  font-size: 14px;
  line-height: 22px;
  text-align: right;
}
.watermark-hero {
  position: absolute;
  right: 85px;
  bottom: 118px;
  color: #ddd;
  font-size: 20px;
  line-height: 24px;
  text-decoration: underline;
}
.cursor {
  position: absolute;
  left: 453px;
  top: 402px;
  width: 12px;
  height: 20px;
}

/* Explorer window */
.window {
  position: absolute;
  left: 136px;
  top: 60px;
  right: 90px;
  bottom: 70px;
  display: flex;
  flex-direction: column;
  padding: 0 7px 7px;
  background: #67cbea;
}
.titlebar { display: flex; height: 30px; }
.quick-access { display: flex; align-items: center; gap: 7px; }
.quick-access .icon-s { margin: 0 2px; }
.sep { width: 1px; height: 12px; background: #3f88a8; }
.titlebar h1 {
  flex: 1;
  font-size: 14px;
  font-weight: 400;
  line-height: 30px;
  text-align: center;
}
.caption-buttons { display: flex; height: 21px; margin-right: -1px; }
.caption-buttons button {
  width: 28px;
  border: 1px solid #24424e;
  border-top: none;
  margin-right: -1px;
}
.caption-buttons .close { width: 47px; background: #c1564c; }

.ribbon {
  display: flex;
  height: 24px;
  background: #fff;
  border-bottom: 1px solid #dadbdc;
  color: #444;
}
.ribbon button { width: 57px; padding-top: 2px; }
.ribbon .file-tab { width: 56px; padding-top: 0; background: #1979ca; color: #fff; }
.ribbon .plain { width: 22px; padding-top: 0; }
.ribbon .help {
  width: 14px;
  height: 14px;
  margin: 4px;
  border-radius: 50%;
  background: #1c74c8;
  color: #fff;
  font-weight: 700;
}

.address-row {
  display: flex;
  align-items: center;
  gap: 10px;
  height: 37px;
  padding: 0 11px 0 9px;
  background: #fff;
}
.address-row .up { width: 16px; margin-right: -5px; }
.address {
  flex: 1;
  display: flex;
  align-items: center;
  gap: 8px;
  height: 23px;
  padding: 0 6px 0 4px;
  border: 1px solid #7b7b7b;
}
.address .refresh { margin-left: 3px; }
.crumb-arrow { width: 5px; height: 8px; }
.search {
  display: flex;
  align-items: center;
  width: 204px;
  height: 23px;
  padding: 0 9px;
  border: 1px solid #7b7b7b;
}
.search input {
  flex: 1;
  min-width: 0;
  border: none;
  outline: none;
  font: inherit;
}
.search input::placeholder { color: #6d6d6d; opacity: 1; }

.toolbar {
  display: flex;
  justify-content: flex-end;
  height: 30px;
  padding-right: 4px;
  background: #f0f0f0;
}
.toolbar button { width: 32px; }
.toolbar .on { background: #cfe6f8; border: 1px solid #3c9cd4; }
.toolbar .drop { width: 54px; gap: 10px; padding-left: 4px; }
.toolbar .shell { width: 39px; border-left: 1px solid #999; padding-left: 8px; }

.content {
  flex: 1;
  display: flex;
  min-height: 0;
  background: #fff;
}
.nav-pane {
  display: flex;
  flex-direction: column;
  width: 160px;
  padding-right: 2px;
  border-right: 1px solid #f4f4f4;
}
.tree { flex: 1; min-height: 0; overflow: hidden; padding-top: 9px; }
.node {
  display: flex;
  align-items: center;
  gap: 5px;
  height: 21px;
  line-height: 21px;
  white-space: nowrap;
}
.level-0 { padding-left: 20px; }
.level-1 { padding-left: 30px; }
.level-1 + .level-0 { margin-top: 21px; }
.node.current { background: #f0f0f0; }
.hscroll {
  display: flex;
  height: 17px;
  margin: 0 0 0 1px;
  border: 1px solid #b8b8b8;
}
.hscroll button { width: 16px; }
.hscroll .thumb {
  width: 89px;
  margin-right: auto;
  display: flex;
  align-items: center;
  justify-content: center;
  background: #dadada;
  border: 1px solid #b0b0b0;
  border-width: 0 1px;
}
.hscroll button:last-child { border-left: 1px solid #c4c4c4; }

.file-pane { flex: 1; overflow: hidden; padding-right: 15px; min-width: 0; }
table {
  width: 100%;
  border-collapse: separate;
  border-spacing: 0;
  table-layout: fixed;
}
.c-edge { width: 14px; }
.c-date { width: 120px; }
.c-size { width: 77px; }
.c-end { width: 4px; }
th {
  height: 25px;
  padding-left: 6px;
  text-align: left;
  font-weight: 400;
  color: #4c607a;
  border-top: 1px solid #ececec;
  border-bottom: 1px solid #e4e6ea;
  border-left: 1px solid #e2e4e8;
}
th:first-child, th:nth-child(2) { border-left: none; }
th:first-child, th:last-child { padding: 0; }
th:nth-child(2) { padding-left: 3px; }
th:last-child { border-left: none; border-right: 1px solid #e2e4e8; }
.sorted { position: relative; }
.sort { position: absolute; top: 0; left: calc(50% - 4px); width: 8px; height: 4px; }
tbody::before { content: ''; display: block; height: 6px; }
td {
  height: 21px;
  padding-left: 7px;
  color: #6d6d6d;
  white-space: nowrap;
  overflow: hidden;
  border: 1px solid transparent;
  border-width: 1px 0;
  line-height: 19px;
}
td:first-child, td:last-child { padding: 0; }
td.name {
  display: flex;
  align-items: center;
  gap: 4px;
  padding-left: 3px;
  color: #000;
  border-left-width: 1px;
}
td.size { text-align: right; padding: 0 3px 0 0; border-right-width: 1px; }
.selected td:not(:first-child):not(:last-child) { background: #cbe0f7; border-color: #7198c4; }

.vscroll { display: flex; flex-direction: column; width: 17px; border: 1px solid #c8c8c8; }
.vscroll button { height: 16px; }
.vscroll .thumb {
  flex: 303;
  display: flex;
  align-items: center;
  justify-content: center;
  background: #dadada;
  border: 1px solid #b0b0b0;
  border-width: 1px 0;
}
.vscroll .track { flex: 88; border-bottom: 1px solid #c4c4c4; }

.details {
  display: flex;
  align-items: center;
  height: 23px;
  padding: 0 4px 0 13px;
  background: #fff;
  color: #1e3a66;
}
.view { width: 22px; height: 23px; }
.view.on { background: #c5e3f6; border: 1px solid #3f86b8; }
.statusbar {
  display: flex;
  height: 23px;
  line-height: 24px;
  background: #fff;
  border-top: 1px solid #8c8c8c;
  white-space: nowrap;
}
.s-main { flex: 1; padding-left: 2px; }
.s-size { width: 88px; padding-left: 5px; border-left: 1px solid #c8c8c8; }
.s-zone {
  display: flex;
  align-items: center;
  gap: 4px;
  width: 143px;
  padding-left: 4px;
  border-left: 1px solid #c8c8c8;
}
.grip { width: 9px; height: 9px; align-self: flex-end; }

/* Taskbar */
.taskbar {
  display: flex;
  height: 40px;
  background: #67cbea;
  border-top: 1px solid #4a9cb8;
  border-bottom: 1px solid #2c7c98;
}
.start { width: 51px; background: #7fd2ee; }
.tasks { flex: 1; display: flex; gap: 2px; }
.tasks button { width: 60px; }
.tasks .running { border: 1px solid #2f8cae; border-width: 0 1px; background: #72cfec; }
.tasks .active { background: #a4dff2; }
.icon-task { width: 32px; height: 32px; }
.icon-task.big { width: 36px; height: 36px; }
.tray { display: flex; align-items: center; gap: 8px; padding-right: 12px; border-right: 1px solid #2f8cae; }
.tray .icon-s { margin-right: 6px; }
.clock {
  display: flex;
  flex-direction: column;
  width: 60px;
  margin-left: 4px;
  text-align: center;
  line-height: 17px;
  color: #10303c;
}
```
